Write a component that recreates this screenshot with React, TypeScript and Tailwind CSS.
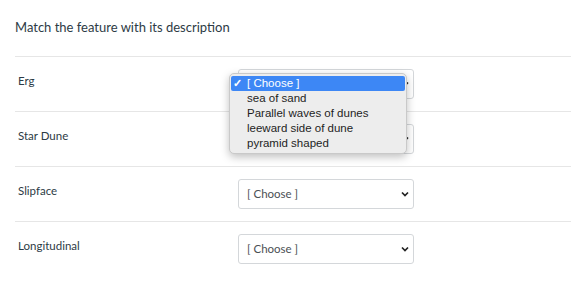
import { useState } from "react";

const rows = ["Erg", "Star Dune", "Slipface", "Longitudinal"];
const options = ["sea of sand", "Parallel waves of dunes", "leeward side of dune", "pyramid shaped"];

function Chevron() {
  return (
    <svg
      width="8"
      height="6"
      viewBox="0 0 8 6"
      className="pointer-events-none absolute right-[5px] top-1/2 -translate-y-1/2"
    >
      <path d="M1 1.5 L4 4.5 L7 1.5" fill="none" stroke="#222" strokeWidth="1.7" />
    </svg>
  );
}

function ChooseSelect() {
  const [value, setValue] = useState("");
  return (
    <div className="relative my-3 h-[30px] w-[176px]">
      <select
        value={value}
        onChange={(e) => setValue(e.target.value)}
        className="h-full w-full appearance-none rounded-[3px] border border-[#d4d7da] bg-white pl-[8px] text-[11.5px] text-[#4a4f54] outline-none"
      >
        <option value="">[ Choose ]</option>
        {options.map((o) => (
          <option key={o} value={o}>
            {o}
          </option>
        ))}
      </select>
      <Chevron />
    </div>
  );
}

export default function App() {
  return (
    <div className="relative h-[289px] w-[584px] overflow-hidden bg-white font-['Lato',sans-serif] text-[#2d3b45]">
      <div className="pl-[15px] pr-[13px]">
        <div className="h-[56px] pt-[19px] text-[13px] leading-4">
          Match the feature with its description
        </div>
        {rows.map((label) => (
          <div key={label} className="flex border-t border-[#e6e6e6]">
            <div className="w-[223px] pl-[3px] pt-4 text-[11.5px] leading-4">{label}</div>
            <ChooseSelect />
          </div>
        ))}
      </div>

      {/* open native popup of the first select */}
      <div className="absolute left-[229px] top-[73px] flex w-[178px] flex-col rounded-[5px] border border-[#c9c9c9] bg-[#ededed] px-px py-[2px] font-['Liberation_Sans',sans-serif] text-[11.5px] leading-[15px] text-[#1e1e1e] shadow-[0_3px_8px_rgba(0,0,0,0.25)]">
        <div className="flex h-[15px] items-center rounded-[2px] bg-[#3d87f5] pl-[2px] text-white">
          <span className="w-[14px] text-[11px] font-bold">✓</span>
          <span>[ Choose ]</span>
        </div>
        {options.map((o) => (
          <div key={o} className="h-[15px] pl-[16px]">
            {o}
          </div>
        ))}
      </div>
    </div>
  );
}
